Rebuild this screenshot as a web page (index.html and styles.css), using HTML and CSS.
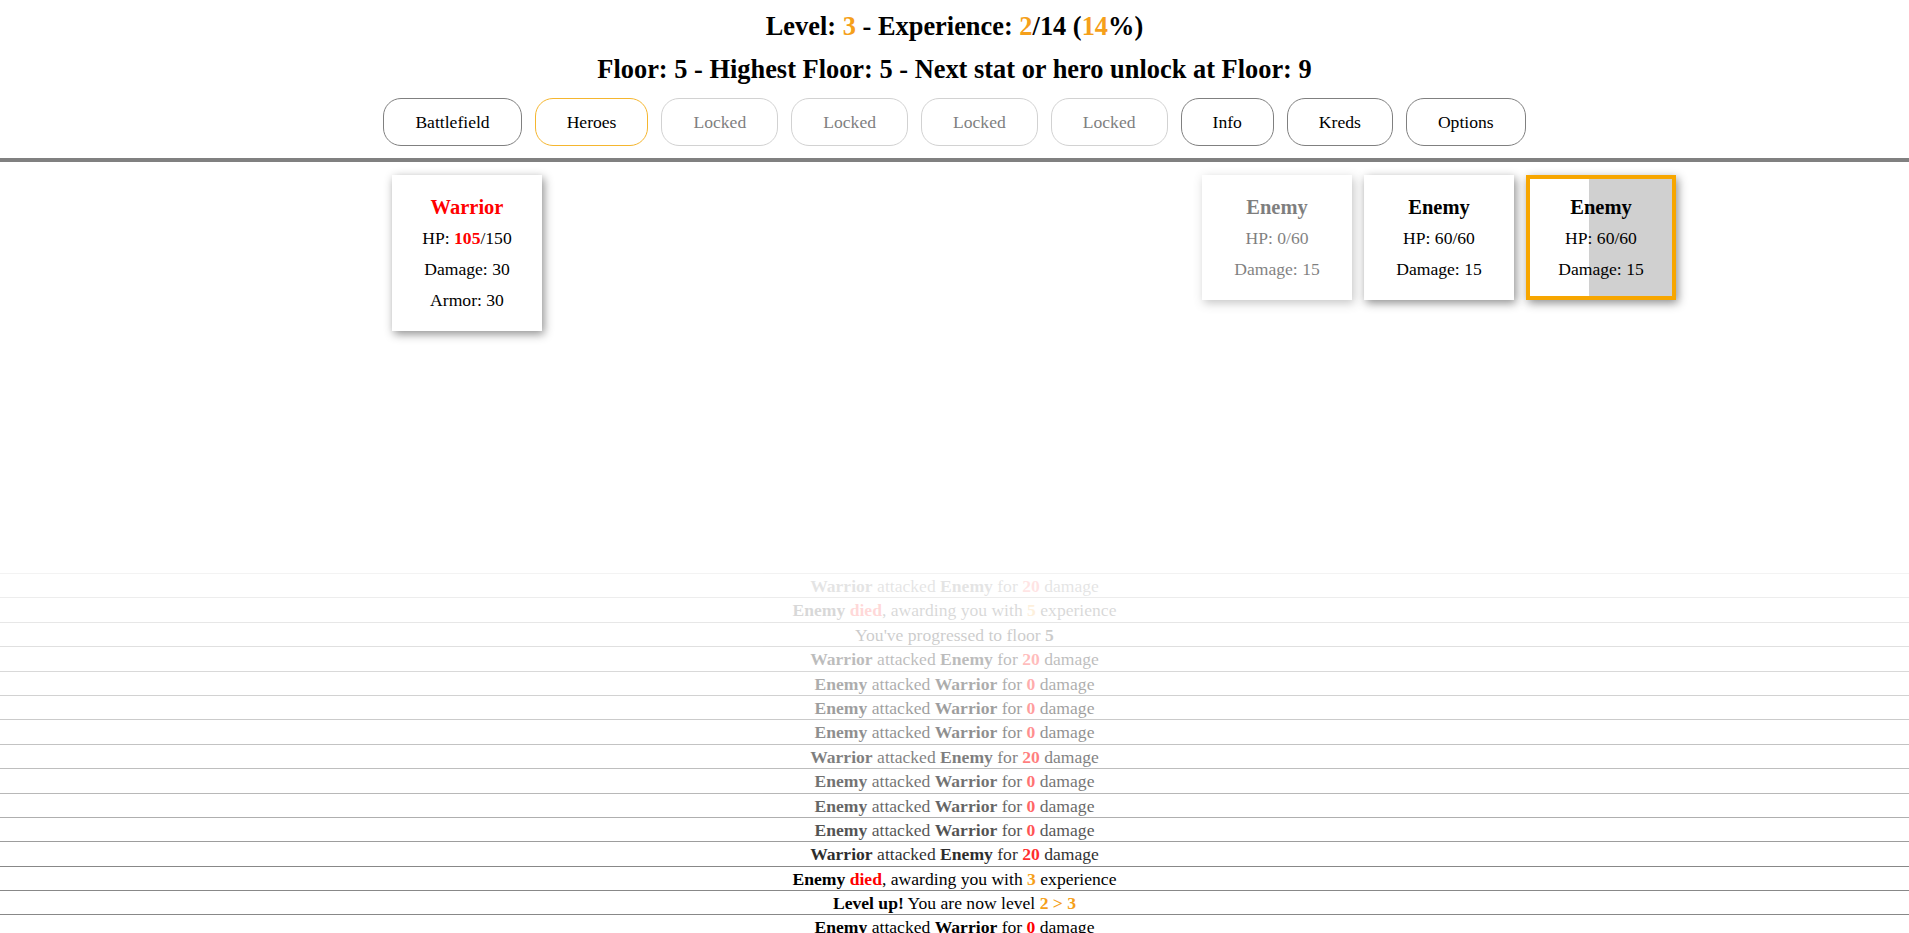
FILE: index.html
```html
<!DOCTYPE html>
<html lang="en">
<head>
<meta charset="utf-8">
<title>Dungeon</title>
<link rel="stylesheet" href="styles.css">
</head>
<body>
<header class="top">
  <div class="stat-line">Level: <span class="gold">3</span> - Experience: <span class="gold">2</span>/14 (<span class="gold">14</span>%)</div>
  <div class="stat-line">Floor: 5 - Highest Floor: 5 - Next stat or hero unlock at Floor: 9</div>
  <nav class="tabs">
    <button class="tab">Battlefield</button>
    <button class="tab tab-active">Heroes</button>
    <button class="tab tab-locked">Locked</button>
    <button class="tab tab-locked">Locked</button>
    <button class="tab tab-locked">Locked</button>
    <button class="tab tab-locked">Locked</button>
    <button class="tab">Info</button>
    <button class="tab">Kreds</button>
    <button class="tab">Options</button>
  </nav>
</header>

<main class="battlefield">
  <section class="side">
    <div class="unit">
      <div class="unit-name hero-name">Warrior</div>
      <div>HP: <b class="red">105</b>/150</div>
      <div>Damage: 30</div>
      <div>Armor: 30</div>
    </div>
  </section>
  <section class="side">
    <div class="unit unit-dead">
      <div class="unit-name">Enemy</div>
      <div>HP: 0/60</div>
      <div>Damage: 15</div>
    </div>
    <div class="unit">
      <div class="unit-name">Enemy</div>
      <div>HP: 60/60</div>
      <div>Damage: 15</div>
    </div>
    <div class="unit unit-target" style="--charge: 41.5%">
      <div class="unit-name">Enemy</div>
      <div>HP: 60/60</div>
      <div>Damage: 15</div>
    </div>
  </section>
</main>

<section class="log">
  <div class="entry" style="opacity:0.1"><b>Warrior</b> attacked <b>Enemy</b> for <b class="red">20</b> damage</div>
  <div class="entry" style="opacity:0.15"><b>Enemy</b> <b class="red">died</b>, awarding you with <b class="gold">5</b> experience</div>
  <div class="entry" style="opacity:0.2">You've progressed to floor <b>5</b></div>
  <div class="entry" style="opacity:0.26"><b>Warrior</b> attacked <b>Enemy</b> for <b class="red">20</b> damage</div>
  <div class="entry" style="opacity:0.32"><b>Enemy</b> attacked <b>Warrior</b> for <b class="red">0</b> damage</div>
  <div class="entry" style="opacity:0.38"><b>Enemy</b> attacked <b>Warrior</b> for <b class="red">0</b> damage</div>
  <div class="entry" style="opacity:0.44"><b>Enemy</b> attacked <b>Warrior</b> for <b class="red">0</b> damage</div>
  <div class="entry" style="opacity:0.5"><b>Warrior</b> attacked <b>Enemy</b> for <b class="red">20</b> damage</div>
  <div class="entry" style="opacity:0.55"><b>Enemy</b> attacked <b>Warrior</b> for <b class="red">0</b> damage</div>
  <div class="entry" style="opacity:0.6"><b>Enemy</b> attacked <b>Warrior</b> for <b class="red">0</b> damage</div>
  <div class="entry" style="opacity:0.67"><b>Enemy</b> attacked <b>Warrior</b> for <b class="red">0</b> damage</div>
  <div class="entry" style="opacity:0.82"><b>Warrior</b> attacked <b>Enemy</b> for <b class="red">20</b> damage</div>
  <div class="entry" style="opacity:1"><b>Enemy</b> <b class="red">died</b>, awarding you with <b class="gold">3</b> experience</div>
  <div class="entry" style="opacity:1"><b>Level up!</b> You are now level <b class="gold">2 &gt; 3</b></div>
  <div class="entry" style="opacity:1"><b>Enemy</b> attacked <b>Warrior</b> for <b class="red">0</b> damage</div>
</section>
</body>
</html>
```

FILE: styles.css
```css
html, body {
  margin: 0;
  padding: 0;
  height: 100%;
}

body {
  font-family: "Liberation Serif", "Times New Roman", serif;
  font-size: 17.6px;
  color: #000;
  background: #fff;
  display: flex;
  flex-direction: column;
  overflow: hidden;
}

.gold { color: #f5a01a; }
.red { color: #f00; }

.top {
  padding-top: 11px;
  padding-bottom: 12px;
  border-bottom: 4px solid #808080;
  text-align: center;
  flex: none;
}

.stat-line {
  font-size: 26.4px;
  font-weight: bold;
  line-height: 30px;
}

.stat-line + .stat-line {
  margin-top: 13px;
}

.tabs {
  margin-top: 14px;
  display: flex;
  justify-content: center;
  gap: 13px;
}

.tab {
  font-family: "Liberation Serif", "Times New Roman", serif;
  font-size: 17.6px;
  line-height: 20px;
  padding: 13px 31px;
  border: 1px solid #808080;
  border-radius: 18px;
  background: #fff;
  color: #000;
}

.tab-active {
  border-color: #f5b62f;
}

.tab-locked {
  border-color: #d2d2d2;
  color: #808080;
}

.battlefield {
  flex: none;
  height: 411px;
  box-sizing: border-box;
  padding: 13px 233px 0 392px;
  display: flex;
  justify-content: space-between;
  align-items: flex-start;
}

.side {
  display: flex;
  gap: 12px;
  align-items: flex-start;
}

.unit {
  width: 150px;
  box-sizing: border-box;
  border: 4px solid transparent;
  padding: 13px 0 11px;
  background: #fff;
  box-shadow: 2px 3px 9px rgba(0, 0, 0, 0.45);
  text-align: center;
  line-height: 31px;
}

.unit-name {
  font-weight: bold;
  font-size: 20.5px;
}

.hero-name {
  color: #f00;
}

.unit-dead {
  opacity: 0.5;
}

.unit-target {
  border-color: #f7a600;
  background: linear-gradient(to right, #fff var(--charge), #d0d0d0 var(--charge));
}

.log {
  flex: 1;
  min-height: 0;
  overflow: hidden;
}

.entry {
  border-top: 1px solid #888;
  padding: 2px 0 1.2px;
  line-height: 20.2px;
  text-align: center;
}
```
